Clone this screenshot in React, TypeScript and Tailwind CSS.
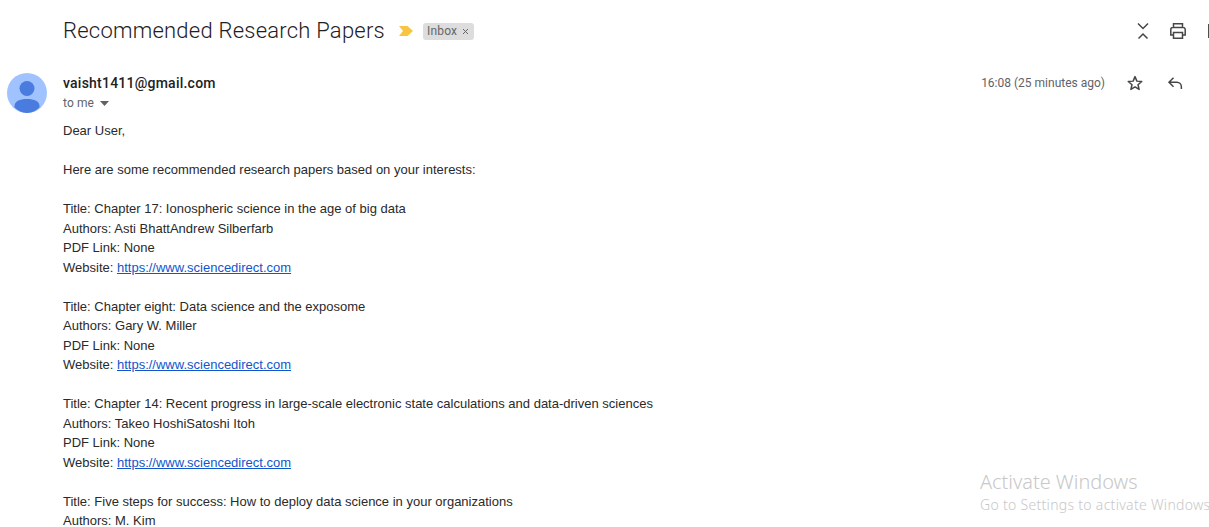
import React from "react";

const papers = [
  { title: "Chapter 17: Ionospheric science in the age of big data", authors: "Asti BhattAndrew Silberfarb" },
  { title: "Chapter eight: Data science and the exposome", authors: "Gary W. Miller" },
  { title: "Chapter 14: Recent progress in large-scale electronic state calculations and data-driven sciences", authors: "Takeo HoshiSatoshi Itoh" },
];

export default function App() {
  return (
    <div className="relative h-[527px] w-[1209px] overflow-hidden bg-white font-['Roboto',sans-serif]">
      <header className="flex h-[62px] items-center pl-[63px]">
        <h1 className="text-[22px] font-light leading-[28px] tracking-[0.23px] text-[#1f2023]">Recommended Research Papers</h1>
        <svg className="ml-[14px] h-[10px] w-[14px]" viewBox="0 0 14 10"><path d="M0 0h8.500L14 5l-5.500 5H0l4-5z" fill="#f9c53f" /></svg>
        <span className="ml-[10px] flex h-[17px] w-[51px] items-center rounded-[3px] bg-[#dddddd] pl-[4px] text-[12px] tracking-[0.2px] text-[#666666]">
          Inbox
          <svg className="ml-[5px] h-[7px] w-[7px]" viewBox="0 0 7 7"><path d="M1 1l5 5M6 1l-5 5" stroke="#666" strokeWidth="1" /></svg>
        </span>
        <div className="-mr-[14px] ml-auto flex items-center gap-[15px]">
          <svg className="h-[20px] w-[20px]" viewBox="0 0 20 20" fill="none" stroke="#444746" strokeWidth="1.500"><path d="M5 2.500l5 5 5-5M5.500 17.500l4.500-4.500 4.500 4.500" /></svg>
          <svg className="h-[20px] w-[20px]" viewBox="0 0 20 20" fill="none" stroke="#444746" strokeWidth="1.500"><path d="M5.500 6V2.800h9V6M5.500 14H2.800V8.500a2 2 0 0 1 2-2h10.400a2 2 0 0 1 2 2V14h-2.700" /><path d="M5.500 11.500h9v5.700h-9z" /></svg>
          <svg className="h-[20px] w-[20px]" viewBox="0 0 20 20" fill="none" stroke="#444746" strokeWidth="1.500"><path d="M5.800 3v14" /></svg>
        </div>
      </header>
      <main className="flex pl-[7px]">
        <svg className="mt-[11px] h-[40px] w-[40px] shrink-0" viewBox="0 0 40 40">
          <circle cx="20" cy="20" r="20" fill="#a0c3ff" />
          <circle cx="20" cy="15.500" r="7.500" fill="#4a7bde" />
          <path d="M7.500 34.500V33c0-4.500 5-7 12.500-7s12.500 2.500 12.500 7v1.500A20 20 0 0 1 20 40a20 20 0 0 1-12.500-5.500z" fill="#4a7bde" />
        </svg>
        <div className="ml-[16px] flex-1">
          <div className="flex h-[59px] items-start">
            <div className="pt-[11px]">
              <div className="text-[14px] font-medium leading-[20px] tracking-[0.23px] text-[#202124]">vaisht1411@gmail.com</div>
              <div className="mt-[1px] flex items-center text-[12px] leading-[18px] tracking-[0.1px] text-[#5f6368]">
                to me
                <svg className="ml-[6px] h-[5px] w-[9px]" viewBox="0 0 9 5"><path d="M0 0h9L4.500 5z" fill="#5f6368" /></svg>
              </div>
            </div>
            <div className="ml-auto flex items-center pr-[25px] pt-[11px]">
              <span className="text-[12px] leading-[20px] text-[#5f6368]">16:08 (25 minutes ago)</span>
              <svg className="ml-[21px] h-[18px] w-[18px]" viewBox="0 0 24 24" fill="none" stroke="#444746" strokeWidth="2"><path d="M12 3.500l2.500 6 6.500.5-5 4.300 1.500 6.300-5.500-3.400-5.500 3.400 1.500-6.300-5-4.300 6.500-.5z" strokeLinejoin="round" /></svg>
              <svg className="ml-[22px] h-[18px] w-[18px]" viewBox="0 0 24 24" fill="none" stroke="#444746" strokeWidth="2"><path d="M10 5l-6 6 6 6M4 11h10.500a6 6 0 0 1 6 6v3" /></svg>
            </div>
          </div>
          <div className="font-['Liberation_Sans',Arial,sans-serif] text-[13px] leading-[19.5px] text-[#2a2a2a]">
            <p>Dear User,</p>
            <p className="mt-[19.5px]">Here are some recommended research papers based on your interests:</p>
            {papers.map((p) => (
              <div key={p.title} className="mt-[19.5px]">
                <p>Title: {p.title}</p>
                <p>Authors: {p.authors}</p>
                <p>PDF Link: None</p>
                <p>Website: <a className="text-[#1155cc] underline">https://www.sciencedirect.com</a></p>
              </div>
            ))}
            <div className="mt-[19.5px]">
              <p>Title: Five steps for success: How to deploy data science in your organizations</p>
              <p>Authors: M. Kim</p>
            </div>
          </div>
        </div>
      </main>
      <div className="absolute left-[980px] top-[470px] whitespace-nowrap font-['Noto_Sans',sans-serif] font-light text-[#c8c8c8]">
        <div className="text-[19.9px] leading-[24px]">Activate Windows</div>
        <div className="mt-[1px] text-[14px] leading-[20px] tracking-[0.3px]">Go to Settings to activate Windows.</div>
      </div>
    </div>
  );
}
